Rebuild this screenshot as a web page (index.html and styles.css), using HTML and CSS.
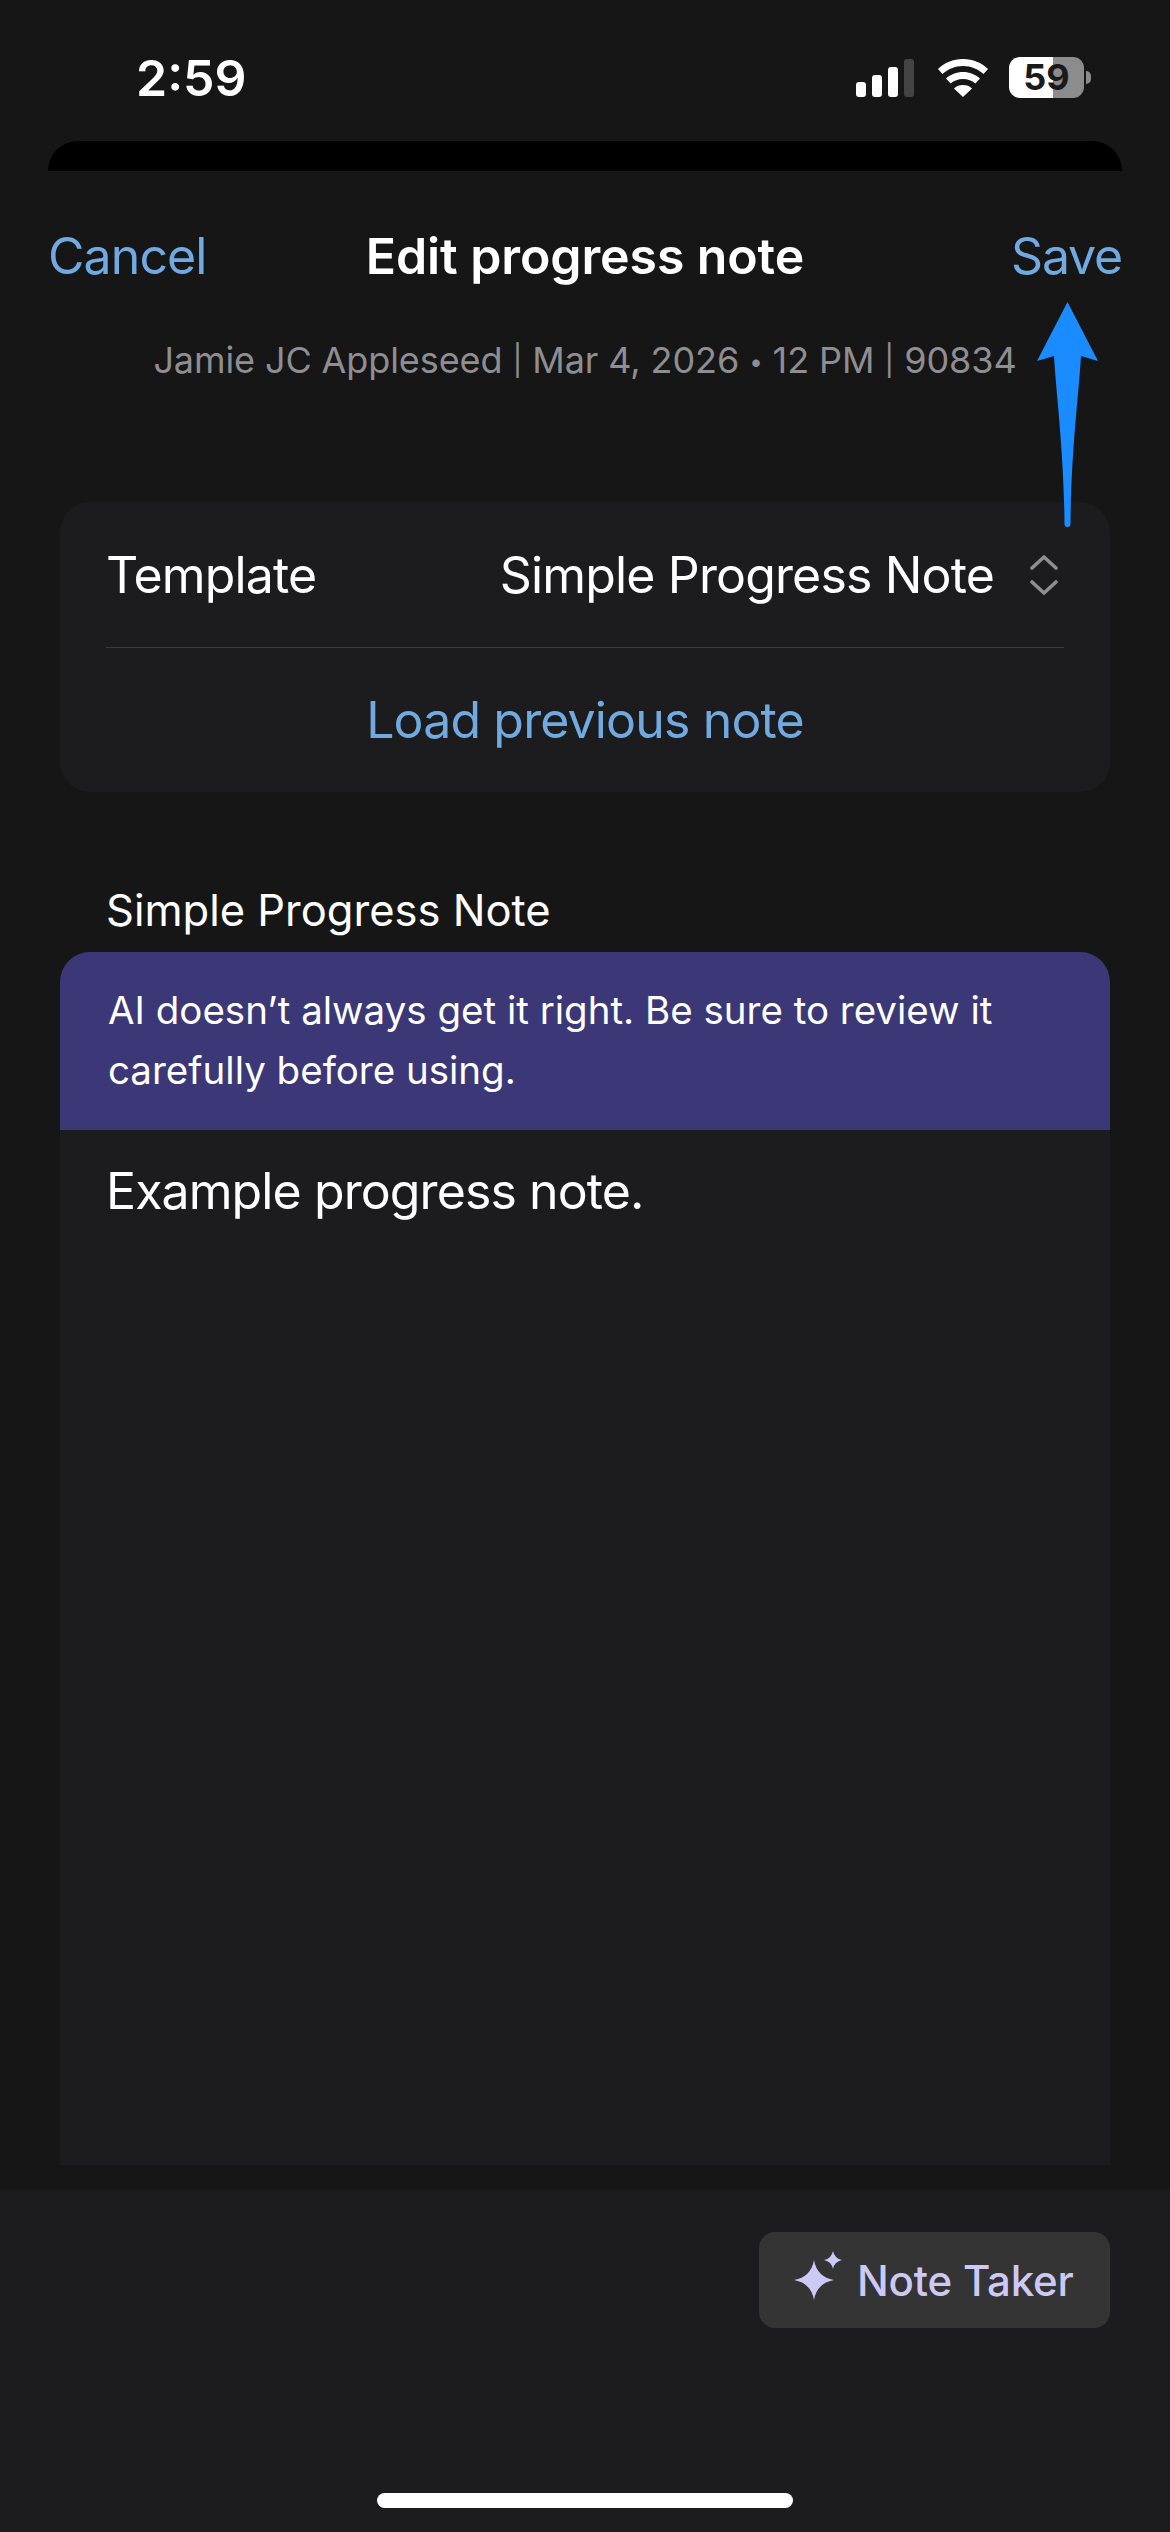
FILE: index.html
```html
<!DOCTYPE html>
<html lang="en">
<head>
<meta charset="utf-8">
<title>Edit progress note</title>
<link rel="stylesheet" href="styles.css">
</head>
<body>
<div class="page">
  <header class="status">
    <span class="time">2:59</span>
    <div class="status-icons">
      <svg class="signal" width="60" height="38" viewBox="0 0 60 38">
        <rect x="0" y="23" width="10" height="15" rx="3" fill="#fff"/>
        <rect x="16" y="16" width="10" height="22" rx="3" fill="#fff"/>
        <rect x="32" y="8" width="10" height="30" rx="3" fill="#fff"/>
        <rect x="48" y="0" width="10" height="38" rx="3" fill="#444"/>
      </svg>
      <svg class="wifi" width="52" height="38" viewBox="0 0 52 38">
        <path d="M26 0C16 0 7.500 3.800 1 10l4.500 5C11 10 18 7 26 7s15 3 20.500 8l4.500-5C44.500 3.800 36 0 26 0Z" fill="#fff"/>
        <path d="M26 13c-6.500 0-12.500 2.400-17 6.500l4.600 5C17 21.500 21.300 20 26 20s9 1.500 12.400 4.500l4.600-5C38.500 15.400 32.500 13 26 13Z" fill="#fff"/>
        <path d="M26 26c-3.500 0-6.800 1.200-9 3.400L26 38l9-8.600C32.800 27.200 29.500 26 26 26Z" fill="#fff"/>
      </svg>
      <div class="battery-wrap">
        <div class="battery">59</div>
        <span class="battery-nub"></span>
      </div>
    </div>
  </header>

  <div class="sheet-edge"></div>

  <nav class="nav">
    <a class="nav-link">Cancel</a>
    <h1 class="nav-title">Edit progress note</h1>
    <a class="nav-link nav-link-end">Save</a>
  </nav>
  <p class="subtitle">Jamie JC Appleseed <span class="sep">|</span> Mar 4, 2026 <span class="dot">•</span> 12 PM <span class="sep">|</span> 90834</p>

  <section class="card template-card">
    <div class="row">
      <span>Template</span>
      <div class="row-value">
        <span>Simple Progress Note</span>
        <svg class="chevrons" width="28" height="40" viewBox="0 0 28 40" fill="none" stroke="#8e8e93" stroke-width="3.600" stroke-linecap="round" stroke-linejoin="round">
          <path d="M2 13 14 2l12 11"/>
          <path d="M2 27l12 11 12-11"/>
        </svg>
      </div>
    </div>
    <div class="divider"></div>
    <div class="row row-center"><a class="link">Load previous note</a></div>
  </section>

  <h2 class="section-label">Simple Progress Note</h2>

  <section class="card note-card">
    <div class="banner">AI doesn’t always get it right. Be sure to review it carefully before using.</div>
    <p class="note-text">Example progress note.</p>
  </section>

  <footer class="footer">
    <div class="footer-actions">
      <button class="note-taker">
        <svg width="52" height="50" viewBox="0 0 52 50" fill="#cdc9f5">
          <path d="M20 9Q23 26 40 29Q23 32 20 49Q17 32 0 29Q17 26 20 9Z"/>
          <path d="M39 0Q40.500 7.500 48 9Q40.500 10.500 39 18Q37.500 10.500 30 9Q37.500 7.500 39 0Z"/>
        </svg>
        <span>Note Taker</span>
      </button>
    </div>
    <div class="home-indicator"></div>
  </footer>

  <svg class="callout-arrow" width="62" height="227" viewBox="0 0 62 227">
    <path d="M30.500 0 61 59 44 54C42 90 34 150 33.500 222a3 3 0 0 1-6 0C27 150 19 90 17 54L0 59Z" fill="#1a8cff"/>
  </svg>
</div>
</body>
</html>
```
FILE: styles.css
```css
* { box-sizing: border-box; }
html, body { margin: 0; padding: 0; background: #161616; }
.page {
  position: relative;
  width: 1170px;
  height: 2532px;
  display: flex;
  flex-direction: column;
  overflow: hidden;
  background: #161616;
  color: #fff;
  font-family: Inter, "Liberation Sans", sans-serif;
}
.status {
  height: 141px;
  flex: none;
  display: flex;
  justify-content: space-between;
  align-items: flex-start;
  padding: 49px 79px 0 136px;
}
.time { font-size: 50px; font-weight: 600; line-height: 58px; }
.status-icons { display: flex; align-items: flex-start; margin-top: 8px; }
.signal { margin: 2px 21px 0 0; }
.wifi { margin: 2px 20px 0 0; }
.battery-wrap { display: flex; align-items: center; }
.battery {
  width: 75px;
  height: 41px;
  border-radius: 11px;
  background: linear-gradient(90deg, #fff 0 59%, #8c8c8c 59% 100%);
  color: #1a1a1c;
  font-size: 36px;
  font-weight: 700;
  line-height: 41px;
  text-align: center;
}
.battery-nub {
  width: 5px;
  height: 13px;
  margin-left: 2px;
  border-radius: 0 6px 6px 0;
  background: #8c8c8c;
}
.sheet-edge {
  flex: none;
  height: 30px;
  margin: 0 48px;
  background: #000;
  border-radius: 30px 30px 0 0;
}
.nav {
  flex: none;
  height: 170px;
  padding: 0 48px;
  display: grid;
  grid-template-columns: 1fr auto 1fr;
  align-items: center;
}
.nav-link { color: #70aae0; font-size: 50px; letter-spacing: -0.9px; }
.nav-link-end { justify-self: end; letter-spacing: -1.200px; }
.nav-title { margin: 0; font-size: 50px; font-weight: 600; letter-spacing: -0.1px; }
.subtitle {
  flex: none;
  margin: 0;
  height: 38px;
  line-height: 38px;
  text-align: center;
  color: #8e8e93;
  font-size: 36px;
  letter-spacing: -0.1px;
}
.sep { font-size: 30px; vertical-align: 2px; }
.dot { font-size: 24px; vertical-align: 3px; }
.card { background: #1c1c1e; flex: none; }
.template-card {
  margin: 123px 60px 0;
  height: 290px;
  border-radius: 30px;
  padding: 0 46px;
}
.row {
  height: 145px;
  display: flex;
  align-items: center;
  justify-content: space-between;
  font-size: 50px;
  letter-spacing: -0.85px;
}
.row-center { justify-content: center; height: 144px; }
.row-value { display: flex; align-items: center; gap: 36px; margin-right: 6px; }
.chevrons { flex: none; }
.divider { height: 1px; background: #3a3a3c; }
.link { color: #70aae0; }
.section-label {
  flex: none;
  margin: 94px 106px 0;
  height: 66px;
  font-size: 43.500px;
  font-weight: 400;
  line-height: 48px;
}
.note-card {
  flex: 1;
  margin: 0 60px 25px;
  border-radius: 30px 30px 0 0;
  overflow: hidden;
}
.banner {
  height: 178px;
  padding: 28px 48px;
  background: #3c3777;
  font-size: 38.500px;
  line-height: 60px;
}
.note-text { margin: 31px 46px 0; font-size: 50px; line-height: 60px; letter-spacing: -0.9px; }
.footer {
  flex: none;
  height: 342px;
  background: #1c1c1e;
  display: flex;
  flex-direction: column;
  align-items: center;
  padding-top: 42px;
}
.footer-actions { align-self: stretch; display: flex; justify-content: flex-end; padding-right: 60px; }
.note-taker {
  width: 351px;
  height: 96px;
  display: flex;
  align-items: center;
  gap: 11px;
  padding: 0 0 0 35px;
  border: 0;
  border-radius: 16px;
  background: #343434;
  color: #cdc9f5;
  font-family: inherit;
  font-size: 42px;
  font-weight: 500;
  letter-spacing: -0.2px;
}
.note-taker svg { flex: none; margin-top: -8px; }
.home-indicator {
  width: 416px;
  height: 15px;
  margin-top: 165px;
  border-radius: 8px;
  background: #fff;
}
.callout-arrow { position: absolute; left: 1037px; top: 302px; }
```
